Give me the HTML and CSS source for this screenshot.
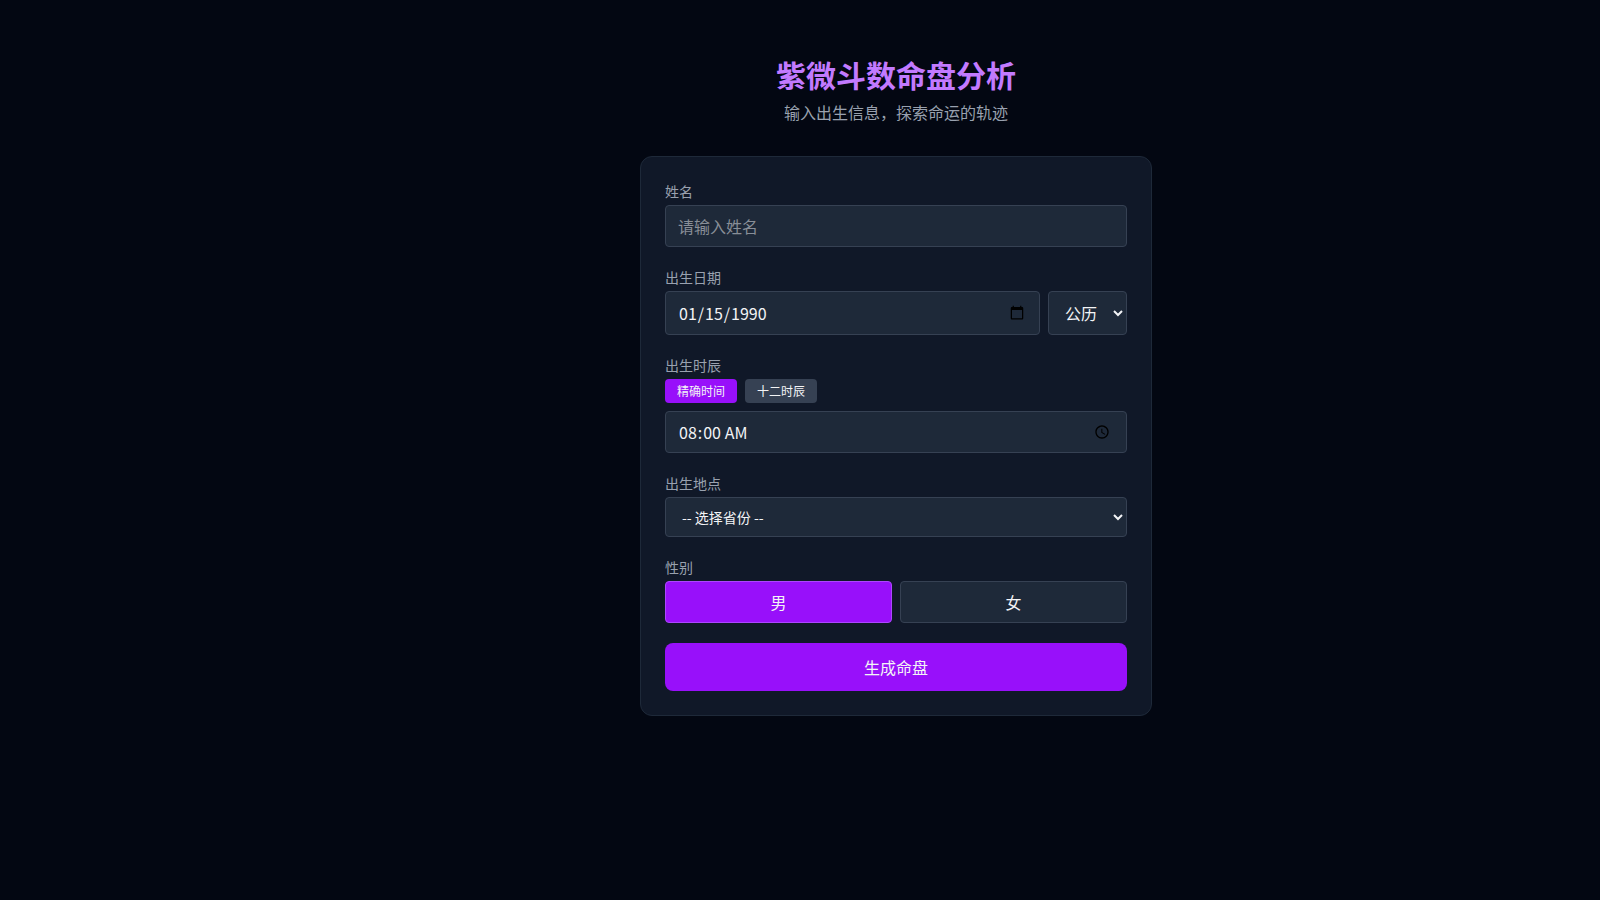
FILE: index.html
```html
<!DOCTYPE html>
<html lang="zh-CN">

<head>
    <meta charset="UTF-8">
    <meta name="viewport" content="width=device-width, initial-scale=1.0">
    <title>紫微斗数命盘分析</title>
    <link rel="stylesheet" href="styles.css">
</head>

<body>
    <main class="page">
        <header class="page-header">
            <h1>紫微斗数命盘分析</h1>
            <p>输入出生信息，探索命运的轨迹</p>
        </header>

        <form class="card">
            <div class="field">
                <label for="name">姓名</label>
                <input class="control" type="text" id="name" placeholder="请输入姓名">
            </div>

            <div class="field">
                <label for="birth-date">出生日期</label>
                <div class="row">
                    <input class="control" type="date" id="birth-date" value="1990-01-15">
                    <select class="control calendar" aria-label="历法">
                        <option>公历</option>
                        <option>农历</option>
                    </select>
                </div>
            </div>

            <div class="field">
                <label for="birth-time">出生时辰</label>
                <div class="row modes">
                    <button class="mode active" type="button">精确时间</button>
                    <button class="mode" type="button">十二时辰</button>
                </div>
                <input class="control" type="time" id="birth-time" value="08:00">
            </div>

            <div class="field">
                <label for="province">出生地点</label>
                <select class="control province" id="province">
                    <option>-- 选择省份 --</option>
                </select>
            </div>

            <div class="field" role="group" aria-labelledby="gender-label">
                <span class="label" id="gender-label">性别</span>
                <div class="row">
                    <button class="control gender active" type="button">男</button>
                    <button class="control gender" type="button">女</button>
                </div>
            </div>

            <button class="submit" type="submit">生成命盘</button>
        </form>
    </main>
</body>

</html>
```

FILE: styles.css
```css
* {
    box-sizing: border-box;
    margin: 0;
}

body {
    min-height: 100vh;
    background: #030712;
    color: #f3f4f6;
    font-family: "Noto Sans CJK SC", sans-serif;
    font-size: 16px;
    line-height: 24px;
}

button,
input,
select {
    font: inherit;
    color: inherit;
}

button {
    border: none;
    cursor: pointer;
}

.page {
    margin-left: 192px;
    padding: 56px 24px;
}

.page-header {
    margin-bottom: 32px;
    text-align: center;
}

.page-header h1 {
    margin-bottom: 8px;
    color: #c27aff;
    font-size: 30px;
    line-height: 36px;
    font-weight: 700;
}

.page-header p {
    color: #99a1af;
}

.card {
    display: flex;
    flex-direction: column;
    gap: 20px;
    max-width: 512px;
    margin: 0 auto;
    padding: 24px;
    background: #101828;
    border: 1px solid #1e2939;
    border-radius: 12px;
}

.field label,
.field .label {
    display: block;
    margin-bottom: 4px;
    color: #99a1af;
    font-size: 14px;
    line-height: 20px;
}

.control {
    display: block;
    width: 100%;
    padding: 8px 12px;
    background: #1e2939;
    border: 1px solid #364153;
    border-radius: 4px;
}

.control::placeholder {
    color: #888e97;
}

.control::-webkit-datetime-edit {
    display: inline-flex;
    padding-top: 0;
    padding-bottom: 0;
}

.control::-webkit-datetime-edit-fields-wrapper,
.control::-webkit-datetime-edit-month-field,
.control::-webkit-datetime-edit-day-field,
.control::-webkit-datetime-edit-year-field,
.control::-webkit-datetime-edit-hour-field,
.control::-webkit-datetime-edit-minute-field,
.control::-webkit-datetime-edit-meridiem-field {
    padding-top: 0;
    padding-bottom: 0;
}

.row {
    display: flex;
    gap: 8px;
}

.calendar {
    width: auto;
}

.province {
    font-size: 14px;
}

.modes {
    margin-bottom: 8px;
}

.mode {
    padding: 4px 12px;
    background: #364153;
    border-radius: 4px;
    font-size: 12px;
    line-height: 16px;
}

.mode.active {
    background: #9810fa;
}

.gender.active {
    background: #9810fa;
    border-color: #ad46ff;
}

.submit {
    padding: 12px;
    background: #9810fa;
    border-radius: 8px;
}
```
